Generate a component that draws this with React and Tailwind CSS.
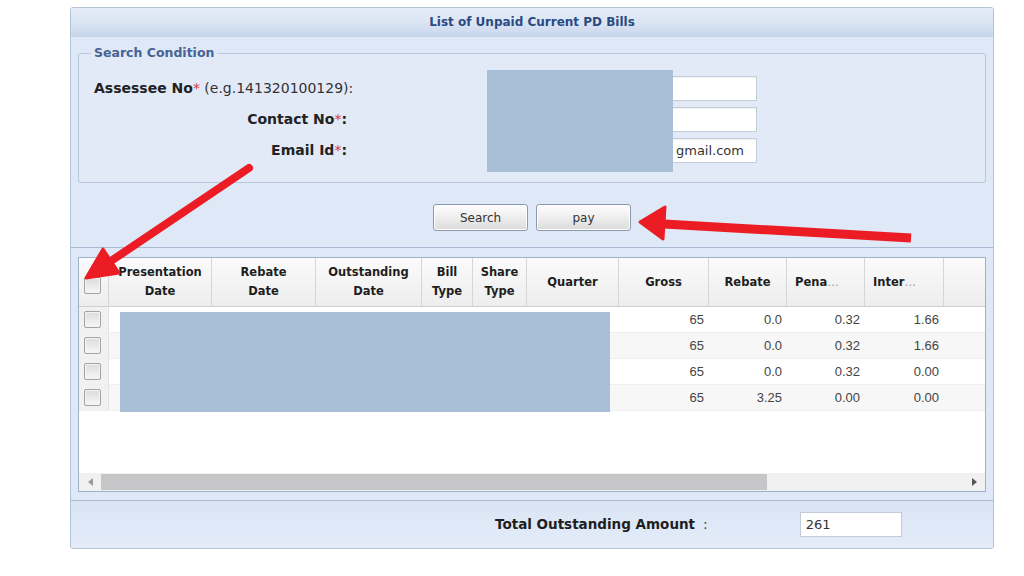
import React from 'react';

const cols = [
  { w: 'w-[103px]', label: ['Presentation', 'Date'] },
  { w: 'w-[104px]', label: ['Rebate', 'Date'] },
  { w: 'w-[106px]', label: ['Outstanding', 'Date'] },
  { w: 'w-[51px]', label: ['Bill', 'Type'] },
  { w: 'w-[54px]', label: ['Share', 'Type'] },
  { w: 'w-[92px]', label: ['Quarter'] },
  { w: 'w-[90px]', label: ['Gross'] },
  { w: 'w-[78px]', label: ['Rebate'] },
  { w: 'w-[78px]', label: ['Pena'], cut: true },
  { w: 'w-[79px]', label: ['Inter'], cut: true },
];

const rows = [
  ['65', '0.0', '0.32', '1.66'],
  ['65', '0.0', '0.32', '1.66'],
  ['65', '0.0', '0.32', '0.00'],
  ['65', '3.25', '0.00', '0.00'],
];

const CheckBox = () => (
  <div className="w-[17px] h-[17px] border border-[#a3a3a3] rounded-[2px] bg-gradient-to-b from-[#dcdcdc] to-[#f7f7f7] shadow-[inset_0_0_0_1px_#f4f4f4]" />
);

const Field = ({ value }) => (
  <div className="w-[267px] h-[25px] bg-white border border-[#c4ccd8] shadow-[inset_0_1px_1px_rgba(0,0,0,0.06)] flex items-center justify-end pr-[12px] text-[13px] text-[#333] font-['DejaVu_Sans',sans-serif]">
    {value}
  </div>
);

const Btn = ({ children }) => (
  <button
    type="button"
    className="h-[27px] w-[95px] rounded-[3px] border border-[#8c9aac] bg-gradient-to-b from-[#fdfdfd] via-[#eeeeee] to-[#dadada] text-[12px] text-[#333] font-['DejaVu_Sans',sans-serif] shadow-[inset_0_0_0_1px_#ffffff]"
  >
    {children}
  </button>
);

const Req = () => <span className="text-[#d23a3a]">*</span>;

export default function App() {
  return (
    <div className="relative w-[1024px] h-[576px] bg-white pt-[7px] pl-[70px] font-['DejaVu_Sans',sans-serif] overflow-hidden">
      <div className="w-[924px] h-[542px] border border-[#b4c3d8] rounded-[3px] bg-[#dfe8f6] flex flex-col overflow-hidden">
        {/* title + search */}
        <div className="h-[239px] flex flex-col">
          <div className="h-[29px] shrink-0 border-b border-[#c4d2e6] bg-gradient-to-b from-[#e6edf8] via-[#dbe5f4] to-[#c9d7ec] flex items-center justify-center text-[12px] font-bold text-[#2b4a82]">
            List of Unpaid Current PD Bills
          </div>

          <fieldset className="mx-[7px] mt-[8px] border border-[#b9c8dc] rounded-[2px] bg-[#e2eaf7] pb-[19px]">
            <legend className="ml-[12px] px-[3px] text-[12.5px] leading-[16px] font-bold text-[#456494]">
              Search Condition
            </legend>
            <div className="pl-[15px] pt-[15px] flex flex-col gap-[6px] text-[14px] text-[#222]">
              <div className="flex items-center h-[25px]">
                <div className="w-[266px]">
                  <span className="font-bold">Assessee No</span>
                  <Req /> <span className="text-[#333]">(e.g.141320100129):</span>
                </div>
                <div className="ml-[130px]">
                  <Field value="" />
                </div>
              </div>
              <div className="flex items-center h-[25px]">
                <div className="w-[266px] text-right pr-[13px]">
                  <span className="font-bold">Contact No</span>
                  <Req />
                  <span className="font-bold">:</span>
                </div>
                <div className="ml-[130px]">
                  <Field value="" />
                </div>
              </div>
              <div className="flex items-center h-[25px]">
                <div className="w-[266px] text-right pr-[13px]">
                  <span className="font-bold">Email Id</span>
                  <Req />
                  <span className="font-bold">:</span>
                </div>
                <div className="ml-[130px]">
                  <Field value="gmail.com" />
                </div>
              </div>
            </div>
          </fieldset>

          <div className="mt-[21px] flex justify-center gap-[8px]">
            <Btn>Search</Btn>
            <Btn>pay</Btn>
          </div>
        </div>

        {/* grid */}
        <div className="h-[253px] border-t border-[#a9b9cf] bg-[#dfe8f6] px-[7px] pt-[9px] pb-[8px]">
          <div className="relative h-[235px] border border-[#9fb0c8] bg-white flex flex-col">
            <div className="h-[49px] shrink-0 flex border-b border-[#d0d0d0] bg-gradient-to-b from-[#fbfbfb] to-[#ededed] text-[11.5px] font-bold text-[#1e1e1e] leading-[19px]">
              <div className="w-[30px] border-r border-[#d6d6d6] pl-[5px] pt-[19px]">
                <CheckBox />
              </div>
              {cols.map((c, i) => (
                <div
                  key={i}
                  className={`${c.w} border-r border-[#d6d6d6] flex flex-col justify-center ${c.cut ? 'items-start pl-[8px]' : 'items-center'}`}
                >
                  {c.cut ? (
                    <span>
                      {c.label[0]}
                      <span className="font-normal text-[#9a9a9a]">…</span>
                    </span>
                  ) : (
                    c.label.map((t) => <span key={t}>{t}</span>)
                  )}
                </div>
              ))}
              <div className="flex-1" />
            </div>

            {rows.map((r, i) => (
              <div
                key={i}
                className={`h-[26px] shrink-0 flex border-b border-[#eeeeee] text-[13px] text-[#444] font-['Liberation_Sans',sans-serif] ${i % 2 ? 'bg-[#f7f7f7]' : 'bg-white'}`}
              >
                <div className="w-[30px] border-r border-[#e2e2e2] bg-[#f1f1f1] pl-[5px] flex items-center">
                  <CheckBox />
                </div>
                <div className="w-[510px]" />
                {r.map((v, j) => (
                  <div key={j} className={`${cols[6 + j].w} flex items-center justify-end pr-[5px] pt-[1px]`}>
                    {v}
                  </div>
                ))}
                <div className="flex-1" />
              </div>
            ))}

            <div className="flex-1" />

            <div className="h-[18px] shrink-0 flex items-center bg-[#f1f1f1]">
              <div className="w-[22px] flex justify-center">
                <div className="w-0 h-0 border-y-[4px] border-y-transparent border-r-[5px] border-r-[#9a9a9a]" />
              </div>
              <div className="w-[666px] h-[16px] bg-[#c6c6c8]" />
              <div className="flex-1" />
              <div className="w-[22px] flex justify-center">
                <div className="w-0 h-0 border-y-[4px] border-y-transparent border-l-[5px] border-l-[#555]" />
              </div>
            </div>

            {/* redacted cells */}
            <div className="absolute left-[41px] top-[54px] w-[490px] h-[100px] bg-[#a9bfd8]" />
          </div>
        </div>

        {/* footer */}
        <div className="flex-1 border-t border-[#a9b9cf] bg-gradient-to-b from-[#d9e4f4] to-[#e4ecf9] flex items-center">
          <div className="ml-[424px] text-[13.5px] font-bold text-[#1e1e1e]">Total Outstanding Amount</div>
          <div className="ml-[8px] text-[14px] text-[#444]">:</div>
          <div className="ml-[92px] w-[102px] h-[25px] bg-white border border-[#c4ccd8] flex items-center pl-[5px] text-[13px] text-[#333]">
            261
          </div>
        </div>
      </div>

      {/* redacted inputs */}
      <div className="absolute left-[487px] top-[70px] w-[186px] h-[102px] bg-[#a9bfd8]" />

      {/* red annotation arrows */}
      <svg className="absolute left-0 top-0 pointer-events-none" width="1024" height="576" viewBox="0 0 1024 576">
        <g fill="#ec1c24" stroke="#ec1c24" strokeLinejoin="round" strokeLinecap="round">
          <line x1="249" y1="168" x2="111" y2="261" strokeWidth="8" />
          <polygon points="86,278 103,249 119,273" strokeWidth="3" />
          <line x1="664" y1="224" x2="911" y2="238" strokeWidth="9" strokeLinecap="butt" />
          <polygon points="640,222 665,207 663,239" strokeWidth="3" />
        </g>
      </svg>
    </div>
  );
}
